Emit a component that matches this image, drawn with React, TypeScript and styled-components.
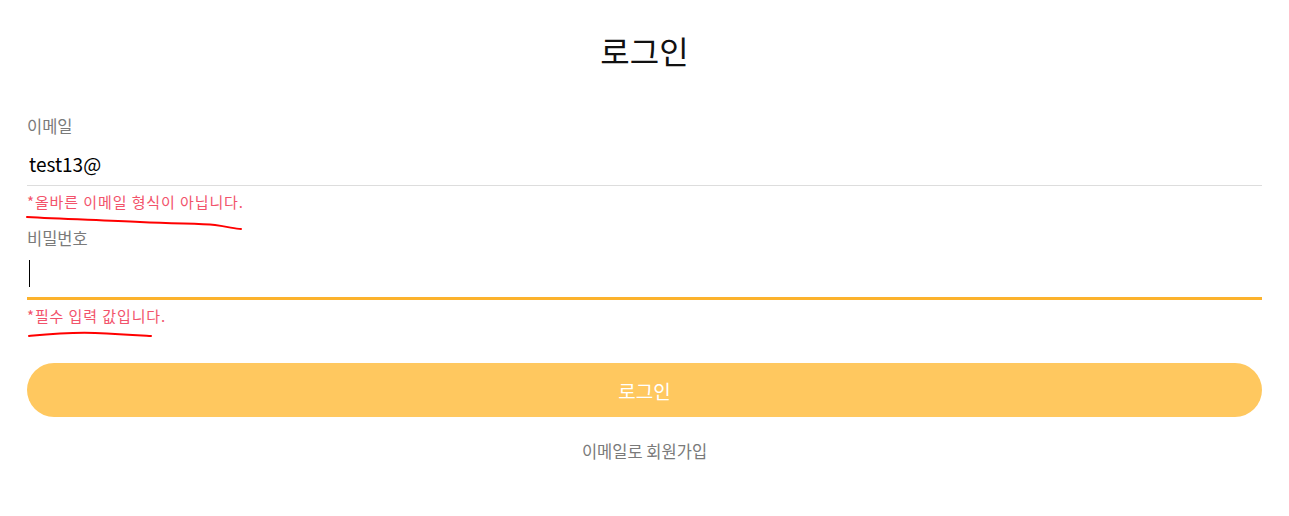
import React from 'react';
import styled, { createGlobalStyle } from 'styled-components';

const GlobalStyle = createGlobalStyle`
    html, body {
        margin: 0;
        padding: 0;
        background: #ffffff;
    }
    body {
        font-family: 'Noto Sans CJK KR', 'Noto Sans', sans-serif;
    }
`;

const COLORS = {
    label: '#7a7a7a',
    error: '#f2536b',
    orange: '#fcb22c',
    button: '#ffc85f',
    line: '#dddddd',
};

const Page = styled.div`
    position: relative;
    padding: 30px 27px 0;
    display: flex;
    flex-direction: column;
`;

const Title = styled.h1`
    margin: 0;
    text-align: center;
    font-size: 32px;
    font-weight: 400;
    line-height: 40px;
    color: #111;
`;

const Form = styled.form`
    margin-top: 46px;
    display: flex;
    flex-direction: column;
`;

const Label = styled.label`
    font-size: 16.5px;
    line-height: 20px;
    color: ${COLORS.label};
`;

const FieldBox = styled.div<{ $focused?: boolean }>`
    position: relative;
    display: flex;
    align-items: center;
    height: 49px;
    border-bottom: ${(p) => (p.$focused ? `3px solid ${COLORS.orange}` : `1px solid ${COLORS.line}`)};
`;

const Input = styled.input`
    flex: 1;
    border: none;
    outline: none;
    background: transparent;
    padding: 5px 0 0 2px;
    font-family: 'Noto Sans CJK KR', 'Noto Sans', sans-serif;
    font-size: 19px;
    color: #000;
`;

const Caret = styled.span`
    position: absolute;
    left: 2px;
    top: 12px;
    width: 1px;
    height: 27px;
    background: #000;
`;

const ErrorText = styled.p`
    margin: 6px 0 16px;
    font-size: 15px;
    letter-spacing: 0.9px;
    line-height: 20px;
    color: ${COLORS.error};

    &:last-of-type {
        margin-bottom: 6px;
    }
`;

const SubmitButton = styled.button`
    margin-top: 31px;
    height: 54px;
    border: none;
    border-radius: 27px;
    background: ${COLORS.button};
    color: #ffffff;
    font-family: 'Noto Sans CJK KR', 'Noto Sans', sans-serif;
    font-size: 19px;
`;

const JoinLink = styled.a`
    margin-top: 24px;
    text-align: center;
    font-size: 16.5px;
    line-height: 20px;
    color: ${COLORS.label};
    text-decoration: none;
`;

const Scribble = styled.svg`
    position: absolute;
    left: 0;
    top: 0;
    pointer-events: none;
`;

const App = () => {
    return (
        <>
            <GlobalStyle />
            <Page>
                <Title>로그인</Title>
                <Form onSubmit={(e) => e.preventDefault()}>
                    <Label>이메일</Label>
                    <FieldBox>
                        <Input type="email" value="test13@" readOnly />
                    </FieldBox>
                    <ErrorText>*올바른 이메일 형식이 아닙니다.</ErrorText>
                    <Label>비밀번호</Label>
                    <FieldBox $focused>
                        <Input type="password" value="" readOnly />
                        <Caret />
                    </FieldBox>
                    <ErrorText>*필수 입력 값입니다.</ErrorText>
                    <SubmitButton type="submit">로그인</SubmitButton>
                </Form>
                <JoinLink href="#">이메일로 회원가입</JoinLink>
                <Scribble width="1289" height="516">
                    <path
                        d="M27 217 C 60 219, 100 220, 140 222 S 200 223, 215 225 S 235 229, 241 229"
                        fill="none"
                        stroke="#ff0000"
                        strokeWidth="2"
                        strokeLinecap="round"
                    />
                    <path
                        d="M29 336 C 50 334, 70 332, 95 333 S 135 335, 151 336"
                        fill="none"
                        stroke="#ff0000"
                        strokeWidth="2"
                        strokeLinecap="round"
                    />
                </Scribble>
            </Page>
        </>
    );
};

export default App;
